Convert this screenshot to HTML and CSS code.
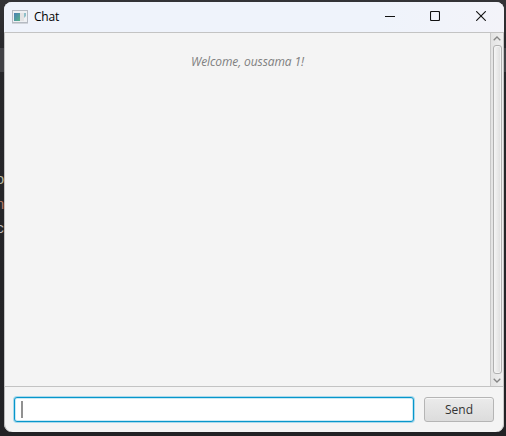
FILE: index.html
```
<!DOCTYPE html>
<html lang="en">
<head>
<meta charset="utf-8">
<title>Chat</title>
<link rel="stylesheet" href="styles.css">
</head>
<body>
<div class="desktop">
  <div class="strip"></div>
  <div class="code code-a">o</div>
  <div class="code code-b">n</div>
  <div class="code code-c">c</div>
</div>
<main class="window">
  <header class="titlebar">
    <svg class="app-icon" width="16" height="14" viewBox="0 0 16 14">
      <defs><linearGradient id="pane" x1="0" y1="0" x2="1" y2="1"><stop offset="0" stop-color="#4a7fb5"/><stop offset="1" stop-color="#58b38a"/></linearGradient></defs>
      <rect x=".5" y=".5" width="15" height="12" fill="#eef0f3" stroke="#b5bac2"/>
      <path d="M0 13.5H16" stroke="#d0d4da"/>
      <rect x="2" y="3" width="6" height="8" fill="url(#pane)"/>
      <rect x="8" y="3" width="4" height="8" fill="#e3e3e4"/>
      <path d="M12 3H14V6L12 8Z" fill="#8fbfc9"/>
    </svg>
    <span class="title">Chat</span>
    <div class="controls">
      <svg width="10" height="10" viewBox="0 0 10 10"><path d="M0 5.5H10"/></svg>
      <svg width="10" height="10" viewBox="0 0 10 10"><rect x=".5" y=".5" width="9" height="9" rx="1"/></svg>
      <svg class="close" width="10" height="10" viewBox="0 0 10 10"><path d="M.2 .2L9.8 9.8M9.8 .2L.2 9.8"/></svg>
    </div>
  </header>
  <section class="messages">
    <div class="log"><p class="notice">Welcome, oussama 1!</p></div>
    <div class="scrollbar">
      <svg width="8" height="5" viewBox="0 0 8 5"><path d="M.7 4.3L4 1L7.3 4.3"/></svg>
      <div class="thumb"></div>
      <svg width="8" height="5" viewBox="0 0 8 5"><path d="M.7 .7L4 4L7.3 .7"/></svg>
    </div>
  </section>
  <footer class="composer">
    <div class="field"><span class="caret"></span></div>
    <button class="send" type="button">Send</button>
  </footer>
</main>
</body>
</html>
```
FILE: styles.css
```
* { box-sizing: border-box; }
body {
  margin: 0;
  width: 506px;
  height: 436px;
  padding: 2px 2px 4px 4px;
  overflow: hidden;
  background: #29292c;
  font-family: "Open Sans", "Noto Sans", sans-serif;
  font-size: 12px;
}
.desktop {
  position: absolute;
  inset: 0;
  overflow: hidden;
  background: linear-gradient(#333336, #27272a 12%, #222225);
}
.strip {
  position: absolute;
  top: 48px;
  width: 100%;
  height: 24px;
  background: #414145;
}
.code {
  position: absolute;
  left: -4px;
  font: 14px/20px "Liberation Mono", monospace;
  color: #bdbdbd;
}
.code-a { top: 170px; color: #b9b9a0; }
.code-b { top: 195px; color: #b57c68; }
.code-c { top: 219px; }
.window {
  position: relative;
  display: flex;
  flex-direction: column;
  width: 500px;
  height: 430px;
  overflow: hidden;
  border-radius: 8px;
  background: #f4f4f4;
  box-shadow: inset 1px 0 #b9b9b9, inset -1px 0 #c9c9c9;
}
.titlebar {
  display: flex;
  align-items: center;
  height: 30px;
  padding: 0 18px 0 8px;
  background: linear-gradient(90deg, #eff3fb, #eff3fb 75%, #f3f3f9);
}
.app-icon { margin-top: -1px; }
.title { margin: -2px 0 0 6px; color: #000; letter-spacing: -.2px; }
.controls {
  display: flex;
  gap: 35px;
  margin-left: auto;
  margin-top: -2px;
}
.controls svg { fill: none; stroke: #111; stroke-width: 1.1; }
.controls .close { margin-left: 1px; }
.messages {
  display: flex;
  height: 355px;
  border: 1px solid #c3c3c3;
}
.log { flex: 1; padding-top: 20px; }
.notice {
  margin: 0;
  line-height: 18px;
  font-style: italic;
  letter-spacing: -.1px;
  text-align: center;
  color: #808080;
}
.scrollbar {
  display: flex;
  flex-direction: column;
  align-items: center;
  width: 13px;
  padding: 3px 0;
  border-left: 1px solid #c8c8c8;
  background: linear-gradient(90deg, #e3e3e3, #efefef);
}
.scrollbar svg { fill: none; stroke: #858585; stroke-width: 1.3; flex: none; }
.thumb {
  flex: 1;
  width: 9px;
  margin: 4px 0;
  border: 1px solid #b0b0b0;
  border-radius: 3px;
  background: linear-gradient(90deg, #f5f5f5, #dddddd);
  box-shadow: inset 0 0 0 1px #f3f3f3;
}
.composer {
  display: flex;
  gap: 10px;
  padding: 10px;
}
.field {
  width: 400px;
  height: 25px;
  padding: 3px 6px;
  border: 1px solid #0796cb;
  border-radius: 3px;
  background: #fff;
  box-shadow: 0 0 0 1px #a9d9eb, inset 0 0 0 1px #c9e9f4;
}
.caret {
  display: block;
  width: 2px;
  height: 17px;
  background: #919191;
}
.send {
  width: 70px;
  height: 25px;
  padding: 0;
  border: 1px solid #b5b5b5;
  border-radius: 3px;
  background: linear-gradient(#ebebeb, #dcdcdc);
  box-shadow: inset 0 1px #f7f7f7;
  font: inherit;
  color: #333;
}
```
